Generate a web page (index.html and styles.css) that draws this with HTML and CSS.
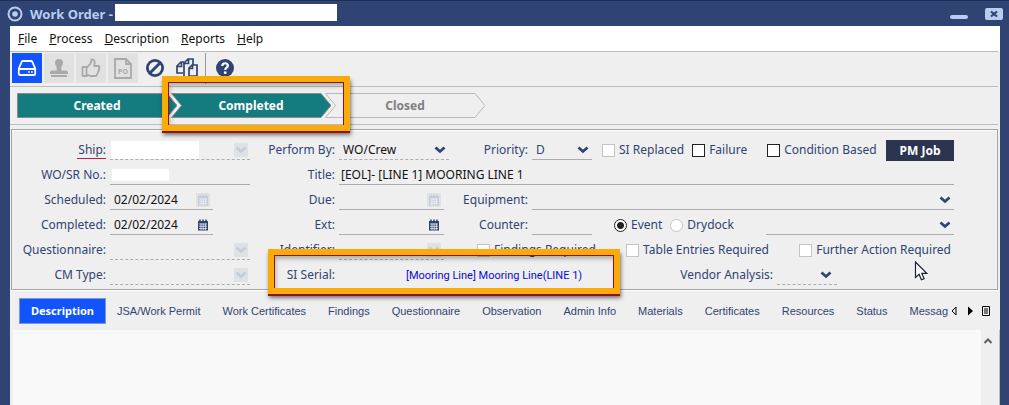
FILE: index.html
```html
<!DOCTYPE html>
<html lang="en">
<head>
<meta charset="utf-8">
<title>Work Order</title>
<link rel="stylesheet" href="styles.css">
</head>
<body>
<svg class="defs" aria-hidden="true">
  <symbol id="chev" viewBox="0 0 14 14"><path d="M2.500 4.500L7 8.500l4.500-4" fill="none" stroke="currentColor" stroke-width="2.800"/></symbol>
  <symbol id="cal" viewBox="0 0 14 14"><path d="M2 3h10v9.500H2z" fill="currentColor"/><path d="M4 1.500v3M7 1.500v3M10 1.500v3" stroke="currentColor" stroke-width="1.500"/><path d="M3 6h8M3 8.300h8M3 10.600h8M5 5.500v6.500M7.200 5.500v6.500M9.400 5.500v6.500" stroke="#efefef" stroke-width=".8"/></symbol>
</svg>
<div class="window">
  <header class="titlebar">
    <svg class="logo" viewBox="0 0 16 16"><circle cx="8" cy="8" r="6.500" fill="none" stroke="#b9cdf3" stroke-width="2"/><circle cx="8" cy="8" r="2.800" fill="#b9cdf3"/></svg>
    <h1 class="title">Work Order -</h1>
    <span class="mask mask-title"></span>
    <div class="window-controls">
      <button class="winbtn minimize" aria-label="Minimize"></button>
      <button class="winbtn close" aria-label="Close"><svg viewBox="0 0 18 12"><path d="M6 3.500l6 5M12 3.500l-6 5" stroke="#2f4472" stroke-width="2.200"/></svg></button>
    </div>
  </header>
  <main class="client">
    <nav class="menubar">
      <button><u>F</u>ile</button><button><u>P</u>rocess</button><button><u>D</u>escription</button><button><u>R</u>eports</button><button><u>H</u>elp</button>
    </nav>
    <div class="toolbar">
      <button class="tool primary" aria-label="Save"><svg viewBox="0 0 30 30"><path d="M6.800 15.500L9.800 8.600Q10.100 8 10.800 8h8.400q.7 0 1 .6l3 6.900v5.200q0 1.300-1.300 1.300H8.100q-1.300 0-1.300-1.300zM7 16h16" fill="none" stroke="#fff" stroke-width="1.800"/><path d="M16 19h1.800M19 19h1.800" stroke="#fff" stroke-width="1.600"/></svg></button>
      <button class="tool off" aria-label="Stamp" disabled><svg viewBox="0 0 30 30"><path d="M15 6a4 4 0 0 1 4 4c0 2-1.700 3-1.700 5.500v2h4.500q2.200 0 2.200 2V21H6v-1.500q0-2 2.200-2h4.500v-2C12.700 13 11 12 11 10a4 4 0 0 1 4-4zM7 22h16v2H7z" fill="currentColor"/></svg></button>
      <button class="tool off" aria-label="Approve" disabled><svg viewBox="0 0 30 30"><path d="M6.500 14h4v9h-4zM10.500 15l4-4.500q1-2 1-4c3-.5 4 2.500 2.600 6.500H23q1 1.500-.2 3 .6 1.800-.8 3 .3 1.500-1 2.200Q21 23 19 23h-4.500q-2-1-4-1" fill="none" stroke="currentColor" stroke-width="1.800" stroke-linejoin="round"/></svg></button>
      <button class="tool off" aria-label="Purchase order" disabled><svg viewBox="0 0 30 30"><path d="M7 6h11l5 5v14H7zM18 6v5h5" fill="none" stroke="currentColor" stroke-width="1.800"/><text class="po" x="15" y="21">PO</text></svg></button>
      <button class="tool" aria-label="Cancel"><svg viewBox="0 0 30 30"><circle cx="15" cy="15" r="7.600" fill="none" stroke="currentColor" stroke-width="2.800"/><path d="M10 20L20 10" stroke="currentColor" stroke-width="2.800"/></svg></button>
      <button class="tool" aria-label="Copy"><svg viewBox="0 0 30 30"><path d="M11 20H5v-7l4-4h3M9.500 9v4.500H5M12 23V10l4-4h5v6M16.500 6v4.500h-4M17 23v-8l3-3h5v11zM20.500 12v3.500H17" fill="none" stroke="currentColor" stroke-width="1.700"/></svg></button>
      <span class="divider"></span>
      <button class="tool" aria-label="Help"><svg viewBox="0 0 30 30"><circle cx="15" cy="15" r="9" fill="currentColor"/><path d="M12.300 13c0-3.600 5.600-3.600 5.600-.3 0 2-2.700 2-2.700 4.200" fill="none" stroke="#fff" stroke-width="2.200"/><circle cx="15.200" cy="19.700" r="1.400" fill="#fff"/></svg></button>
    </div>
    <ol class="steps">
      <li class="step done"><svg viewBox="0 0 160 25"><path d="M.5.5h149.500l10 12-10 12H.5z"/></svg><span>Created</span></li>
      <li class="step done"><svg viewBox="0 0 160 25"><path d="M.5.5h149.500l10 12-10 12H.5l10-12z"/></svg><span>Completed</span></li>
      <li class="step"><svg viewBox="0 0 160 25"><path d="M.5.5h149.500l10 12-10 12H.5l10-12z"/></svg><span>Closed</span></li>
      <li class="callout callout-step" aria-hidden="true"></li>
    </ol>
    <form class="form">
      <label class="label" for="ship"><span class="required">Ship:</span></label>
      <div class="field dashed"><input id="ship" class="mask mask-ship"><svg class="icon disabled"><use href="#chev"/></svg></div>
      <label class="label" for="by">Perform By:</label>
      <div class="field dashed"><select id="by"><option>WO/Crew</option></select><svg class="icon"><use href="#chev"/></svg></div>
      <label class="label" for="prio">Priority:</label>
      <div class="field"><select id="prio" class="blue"><option>D</option></select><svg class="icon"><use href="#chev"/></svg></div>
      <div class="rest checks">
        <label class="check"><input type="checkbox" disabled>SI Replaced</label>
        <label class="check near"><input type="checkbox">Failure</label>
        <label class="check apart"><input type="checkbox">Condition Based</label>
        <button type="button" class="pm">PM Job</button>
      </div>

      <label class="label" for="wo">WO/SR No.:</label>
      <div class="field"><input id="wo" class="mask mask-wo"></div>
      <label class="label" for="title">Title:</label>
      <div class="field wide"><input id="title" class="tight" value="[EOL]- [LINE 1] MOORING LINE 1"></div>

      <label class="label" for="sched">Scheduled:</label>
      <div class="field date"><input id="sched" value="02/02/2024"><svg class="icon disabled"><use href="#cal"/></svg></div>
      <label class="label" for="due">Due:</label>
      <div class="field date2"><input id="due"><svg class="icon disabled"><use href="#cal"/></svg></div>
      <label class="label" for="equip">Equipment:</label>
      <div class="field equip"><select id="equip"><option></option></select><svg class="icon"><use href="#chev"/></svg></div>

      <label class="label" for="comp">Completed:</label>
      <div class="field date"><input id="comp" value="02/02/2024"><svg class="icon"><use href="#cal"/></svg></div>
      <label class="label" for="ext">Ext:</label>
      <div class="field date2"><input id="ext"><svg class="icon"><use href="#cal"/></svg></div>
      <label class="label" for="counter">Counter:</label>
      <div class="field"><input id="counter"></div>
      <div class="rest radios">
        <label class="check"><input type="radio" name="kind" checked>Event</label>
        <label class="check near"><input type="radio" name="kind" disabled>Drydock</label>
        <div class="field grow"><select aria-label="Counter source"><option></option></select><svg class="icon"><use href="#chev"/></svg></div>
      </div>

      <label class="label" for="quest">Questionnaire:</label>
      <div class="field dashed"><select id="quest" disabled></select><svg class="icon disabled"><use href="#chev"/></svg></div>
      <label class="label" for="ident">Identifier:</label>
      <div class="field dashed date2"><select id="ident" disabled></select><svg class="icon disabled"><use href="#chev"/></svg></div>
      <div class="flags">
        <label class="check"><input type="checkbox" disabled>Findings Required</label>
        <label class="check"><input type="checkbox" disabled>Table Entries Required</label>
        <label class="check"><input type="checkbox" disabled>Further Action Required</label>
      </div>

      <label class="label" for="cm">CM Type:</label>
      <div class="field dashed"><select id="cm" disabled></select><svg class="icon disabled"><use href="#chev"/></svg></div>
      <span class="label">SI Serial:</span>
      <div class="serial"><a href="#serial">[Mooring Line] Mooring Line(LINE 1)</a></div>
      <div class="vendor">
        <label for="vendor">Vendor Analysis:</label>
        <div class="field dashed"><select id="vendor"><option></option></select><svg class="icon"><use href="#chev"/></svg></div>
      </div>
      <div class="callout callout-serial" aria-hidden="true"></div>
      <svg class="cursor" viewBox="0 0 14 20"><path d="M1.500 1v15.500l3.600-3.300 2.300 5.600 2.700-1.200-2.300-5.300h4.900z" fill="#fff" stroke="#1b1f3a" stroke-width="1.200"/></svg>
    </form>
    <nav class="tabs">
      <div class="tablist">
        <button class="tab active">Description</button><button class="tab">JSA/Work Permit</button><button class="tab">Work Certificates</button><button class="tab">Findings</button><button class="tab">Questionnaire</button><button class="tab">Observation</button><button class="tab">Admin Info</button><button class="tab">Materials</button><button class="tab">Certificates</button><button class="tab">Resources</button><button class="tab">Status</button><button class="tab">Messag</button>
      </div>
      <div class="tabnav">
        <button aria-label="Previous tabs"><svg viewBox="0 0 10 10"><path d="M7 1v8L3 5z" fill="none" stroke="#000"/></svg></button>
        <button aria-label="Next tabs"><svg viewBox="0 0 10 10"><path d="M3 .5v9L8 5z"/></svg></button>
        <button aria-label="Tab list"><svg viewBox="0 0 10 10"><path d="M1.500.5h7v9h-7zM3 3h4M3 5h4M3 7h4" fill="none" stroke="#000"/></svg></button>
      </div>
    </nav>
    <section class="content">
      <div class="page"></div>
      <div class="scrollbar"><button aria-label="Scroll up"><svg viewBox="0 0 10 10"><path d="M1.500 7L5 3.500 8.500 7" fill="none" stroke="#606060" stroke-width="2"/></svg></button></div>
    </section>
  </main>
</div>
</body>
</html>
```
FILE: styles.css
```css
* { box-sizing: border-box; }
body {
  margin: 0;
  font: 12px/16px "Noto Sans", sans-serif;
  color: #2f4472;
}
button, input, select { font: inherit; color: inherit; border: 0; padding: 0; margin: 0; background: none; }
svg { display: block; }
.defs { position: absolute; width: 0; height: 0; }

.window {
  display: flex;
  flex-direction: column;
  height: 100vh;
  padding: 0 9px 0 10px;
  background: #2f4472;
  border-top: 1px solid #1d2f57;
  overflow: hidden;
}
.titlebar { display: flex; align-items: center; height: 25px; flex: none; }
.logo { width: 16px; height: 16px; margin-left: -3px; }
.title { margin: 0 2px 0 7px; font-size: 13px; line-height: 18px; font-weight: 700; color: #b9cdf3; }
.mask { background: #fff; }
.mask-title { width: 222px; height: 17px; margin-bottom: 2px; }
.window-controls { display: flex; gap: 17px; align-items: center; margin-left: auto; margin-right: -3px; }
.winbtn { width: 18px; border-radius: 2px; background: #b9cdf3; }
.minimize { height: 4px; margin-top: 7px; }
.close { height: 12px; }

.client { flex: 1; display: flex; flex-direction: column; min-height: 0; background: #efefef; }
.menubar { display: flex; gap: 12px; height: 25px; padding: 0 8px 0 8px; background: #fff; color: #111; flex: none; }
.toolbar {
  display: flex;
  gap: 2px;
  height: 36px;
  padding: 1px 2px 0;
  margin-right: 2px;
  border-top: 1px solid #bdbdbd;
  border-bottom: 1px solid #bdbdbd;
  flex: none;
}
.tool { width: 30px; height: 30px; color: #2f4472; }
.primary { background: #1254fb; }
.off { background: #e1e1e1; color: #a9a9a9; }
.po { font: 700 7px "Noto Sans", sans-serif; fill: currentColor; text-anchor: middle; }
.divider { width: 1px; height: 31px; margin: 0 2px 0 1px; background: #999; }

.steps {
  position: relative;
  display: flex;
  height: 38px;
  margin: 0 2px 4px 0;
  padding: 6px 7px;
  border-bottom: 1px solid #bdbdbd;
  list-style: none;
  flex: none;
}
.step { position: relative; width: 160px; height: 25px; margin-right: -6px; text-align: center; line-height: 25px; font-weight: 700; color: #808080; }
.step svg { position: absolute; inset: 0; fill: #efefef; stroke: #b9b9b9; }
.step span { position: relative; }
.done { color: #fff; }
.done svg { fill: #147c7f; stroke: #8b8b8b; }

.callout {
  position: absolute;
  z-index: 2;
  border: 6px solid #f9ab0a;
  box-shadow: 0 2px 0 #8e1220, 1px 4px 4px #0008, inset 1px 1px 0 #8e1220, inset -1px 1px 0 #8e1220, inset 2px 4px 4px #0004;
  pointer-events: none;
}
.callout-step { left: 152px; top: -11px; width: 188px; height: 55px; }

.form {
  position: relative;
  display: grid;
  grid-template-columns: 94px 140px 81px 110px 75px 60px 1fr;
  grid-auto-rows: 25px;
  column-gap: 4px;
  margin: 0 2px 0 1px;
  padding: 5px 43px 4px 0;
  border: 1px solid #a5a5a5;
  box-shadow: inset 0 1px #fff, 0 1px #fff;
  flex: none;
}
.label { text-align: right; padding-top: 7px; white-space: nowrap; }
.required { display: inline-block; border-bottom: 1px solid #b81c50; padding-left: 1px; }
.field { display: flex; align-items: center; min-width: 0; height: 25px; padding-top: 5px; border-bottom: 1px solid #adadad; }
.field input, .field select { flex: 1; min-width: 0; height: 18px; padding-left: 4px; color: #111; appearance: none; outline: none; opacity: 1; }
.field .tight { padding-left: 2px; }
.field .blue { color: #2f4472; }
.field .mask { flex: none; }
.mask-ship { width: 88px; margin-left: 1px; }
.mask-wo { width: 57px; margin-left: 2px; }
.field input.mask-wo { height: 12px; }
.dashed { border-bottom-style: dashed; }
.icon { width: 14px; height: 14px; margin: 0 2px 0 auto; flex: none; }
.icon.disabled { background: #e0e1e2; color: #c3cddd; }
.date { width: 103px; }
.date .icon, .date2 .icon { margin-right: 3px; }
.date2 { width: 105px; }
.wide { grid-column: 4 / -1; }
.equip { grid-column: 6 / -1; }
.rest { display: flex; min-width: 0; }
.check { display: flex; align-items: center; gap: 4px; height: 25px; padding-top: 5px; white-space: nowrap; }
.check input { appearance: none; flex: none; width: 13px; height: 13px; border: 1px solid #222; background: #fff; }
.check input:disabled { border-color: #c4c4c4; }
.check input[type="radio"] { border-radius: 50%; }
.check input[type="radio"]:checked { background: radial-gradient(circle, #222 0 3px, #fff 4px); }
.checks { padding-left: 6px; }
.near { margin-left: 8px; }
.apart { margin-left: 20px; }
.pm { width: 68px; height: 21px; margin: 5px 0 0 auto; flex: none; background: #2b3550; color: #fff; font-weight: 700; }
.radios { padding-left: 18px; }
.grow { flex: 1; margin-left: 32px; }
.flags { grid-column: 5 / -1; display: flex; justify-content: space-between; padding: 0 3px 0 24px; }
.serial { grid-column: 4 / 7; padding: 7px 0 0 67px; white-space: nowrap; }
.serial a { color: #0b0bd8; text-decoration: none; font-family: Roboto, sans-serif; font-size: 11px; }
.vendor { display: flex; gap: 4px; justify-content: flex-end; padding-right: 117px; white-space: nowrap; }
.vendor label { padding-top: 7px; }
.vendor .field { width: 60px; padding-right: 2px; }
.callout-serial { left: 256px; top: 119px; width: 352px; height: 45px; }
.cursor { position: absolute; right: 69px; bottom: 8px; width: 14px; height: 20px; }

.tabs { display: flex; height: 40px; padding: 8px 9px 6px; font-family: "Liberation Sans", sans-serif; font-size: 11px; flex: none; }
.tablist { display: flex; flex: 1; min-width: 0; gap: 22px; overflow: hidden; }
.tab { flex: none; height: 26px; white-space: nowrap; }
.active { width: 87px; margin-right: -11px; background: #1254fb; border: 1px solid #7a97dc; color: #fff; font-family: "Noto Sans", sans-serif; font-weight: 700; }
.tabnav { display: flex; align-items: center; gap: 6px; }
.tabnav button, .tabnav svg { width: 10px; height: 10px; }
.content { flex: 1; display: flex; min-height: 0; padding-left: 3px; }
.page { flex: 1; background: #f9f9f9; }
.scrollbar { width: 19px; padding: 4px 0 0 2px; border-right: 1px solid #bdbdbd; }
.scrollbar svg { width: 10px; height: 10px; }
```
